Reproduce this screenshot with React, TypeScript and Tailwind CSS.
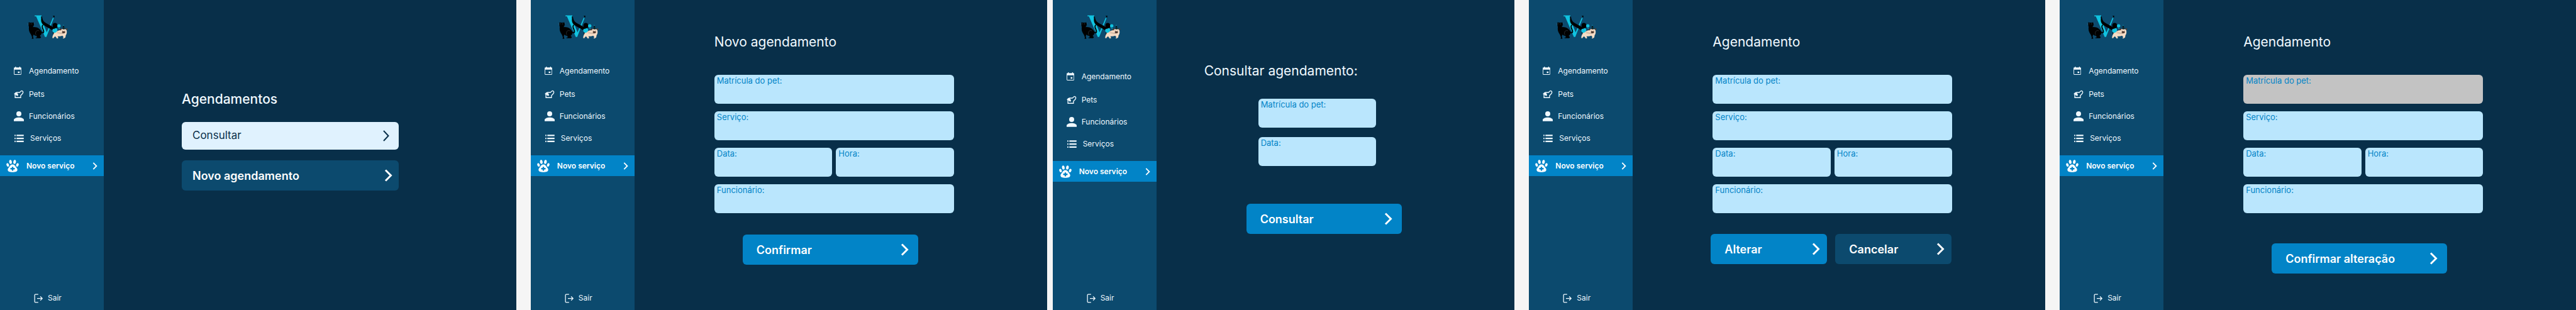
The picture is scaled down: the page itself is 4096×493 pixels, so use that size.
import type { ReactNode } from "react";

function Logo() {
  return (
    <svg viewBox="75 64 340 200" className="ml-[43px] mt-6 h-[38px] w-[65px] shrink-0" role="img" aria-label="Logo">
      <path d="M138 67h57v8l-8 2 52 132 51-122 8 2-62 158h-12L150 75h-12z" fill="#10c3e0" />
      <path d="M290 69h15l-4 20-5-10z" fill="#000" />
      <path d="M198 70c5 16 4 34 20 50 22 18 46 24 84 52l-8 24c-34-22-62-34-82-50-24-18-24-46-14-76z" fill="#000" />
      <ellipse cx="308" cy="153" rx="20" ry="23" fill="#000" />
      <path d="M290 208l14 2-2 26-12 12c4-12 6-24 0-40z" fill="#000" />
      <circle cx="341" cy="154" r="14" fill="#10c3e0" />
      <path d="M341 166l7 14h-8z" fill="#10c3e0" />
      <path
        d="M89 122l10 6q9-4 18 0l10-5q6 12 4 24-2 12-10 18c22-2 44 2 62 20 10 10 14 20 18 23 10 2 8-12 2-24-8-16-10-36 6-41l4 5c-10 4-8 18-2 30 10 20 10 38-6 38l-8-2c-2 12-10 18-16 24 4 6 10 6 10 12l-6 7h-38c-4-4 2-8 12-8l-8-12c-10 0-16-4-20-10-10 8-8 20-4 28l2 6-14 2c-4-3 0-7 2-8-4-14-6-24-14-34-12-16-16-36-13-58-4-10-5-24-1-41z"
        fill="#000"
      />
      <path d="M146 206c6-12 18-16 30-10M150 230c-6-8-6-16-2-24M86 138l-8-3M86 143l-8 4M132 134l6-4" stroke="#7d93a1" strokeWidth="1.500" fill="none" />
      <path d="M97 137l4 1M112 138l4-1" stroke="#fff" strokeWidth="2" />
      <path
        d="M306 194c16 8 30 2 48-8 8-10 40-12 50 2 6 20 2 36-6 46-2 8 0 14-6 20l-12 6-8-3 8-8-10-12c-14 6-28 6-40 4l6 14-10 6-16-20-10 8-4 8-10-1c0-14 4-24 10-34z"
        fill="#f6dcc5"
      />
      <path d="M318 196c14 10 28 18 64 18M322 210c20 10 34 12 56 8" stroke="#6d5347" strokeWidth="1.500" fill="none" />
      <path d="M352 194c-8-6-6-16 4-18l10 6zM400 176c8-4 14 2 13 10l-9 4z" fill="#4f3a31" />
      <path d="M366 196l8 2M388 196l6 1" stroke="#2a1d18" strokeWidth="3" />
      <ellipse cx="380" cy="207" rx="14" ry="9" fill="#4f3a31" />
      <path d="M286 192c0-14 12-18 18-10 4-14 24-12 24 6 0 12-10 20-22 26-12-2-20-10-20-22z" fill="#10c3e0" />
      <path d="M378 148l18 32q-14 6-27 1z" fill="#0b1116" />
      <path d="M378 146l1 8M374 170l4 4M385 166l3 5M387 178l3 1" stroke="#10c3e0" strokeWidth="4" />
    </svg>
  );
}

function CalendarIcon() {
  return (
    <svg viewBox="114 66 84 69" className="h-[13px] w-[16px]" fill="currentColor" aria-hidden="true">
      <path
        fillRule="evenodd"
        d="M121 72h4v-6h7v6h28v-6h7v6h4q6 0 6 6v51q0 6-6 6h-51q-6 0-6-6V78q0-6 6-6zM119 91v36q0 3 3 3h48q3 0 3-3V91z"
      />
      <path d="M148 107h14v13h-14z" />
    </svg>
  );
}

function DogIcon() {
  return (
    <svg viewBox="18 14 82 68" className="h-[13px] w-[16px]" fill="none" stroke="currentColor" strokeWidth="7" aria-hidden="true">
      <path d="M28 47v31h46V61l16-17c5-8 3-18-3-22l-6-1-16 14H41L28 42" />
      <path d="M19 45l14-11 10 2 6 10c5 6 6 12 2 16-4 4-10 2-14-2l-6-8-8 1z" fill="currentColor" stroke="none" />
    </svg>
  );
}

function PersonIcon() {
  return (
    <svg viewBox="114 448 84 83" className="h-[16px] w-[16px]" fill="currentColor" aria-hidden="true">
      <circle cx="156" cy="469" r="21" />
      <path d="M114 530v-10c0-13 24-21 42-21s42 8 42 21v10z" />
    </svg>
  );
}

function ListIcon() {
  return (
    <svg viewBox="114 632 96 64" className="h-[12px] w-[18px]" fill="currentColor" aria-hidden="true">
      <path d="M120 633h9v12h-9zM137 633h61v12h-61zM120 659h9v12h-9zM137 659h61v12h-61zM120 684h9v12h-9zM137 684h61v12h-61z" />
    </svg>
  );
}

function PawIcon() {
  return (
    <svg viewBox="54 845 102 104" className="h-5 w-5" fill="currentColor" aria-hidden="true">
      <ellipse cx="88" cy="863" rx="11" ry="17" transform="rotate(-8 88 863)" />
      <ellipse cx="122" cy="863" rx="11" ry="17" transform="rotate(8 122 863)" />
      <ellipse cx="65" cy="888" rx="10" ry="15" transform="rotate(-18 65 888)" />
      <ellipse cx="145" cy="888" rx="10" ry="15" transform="rotate(18 145 888)" />
      <path
        fillRule="evenodd"
        d="M105 884c14 0 20 10 28 22 6 8 12 12 12 22 0 14-16 20-40 20s-40-6-40-20c0-10 6-14 12-22 8-12 14-22 28-22zM99 903v10H87v12h12v11h12v-11h12v-12h-12v-10z"
      />
    </svg>
  );
}

function LogoutIcon() {
  return (
    <svg viewBox="24 18 76 82" className="h-[15px] w-[14px]" fill="none" stroke="currentColor" strokeWidth="7" aria-hidden="true">
      <path d="M61 24H36q-6 0-6 6v58q0 6 6 6h25M51 60h44M79 43l17 17-17 17" />
    </svg>
  );
}

function Chevron({ className }: { className: string }) {
  return (
    <svg viewBox="0 0 13 20" className={className} fill="none" stroke="currentColor" strokeWidth="3" aria-hidden="true">
      <path d="M2 1.500L10.500 10 2 18.500" />
    </svg>
  );
}

function MenuLink({ icon, children }: { icon: ReactNode; children: ReactNode }) {
  return (
    <a href="#" className="flex h-[35px] items-center gap-2 pl-[22px] text-[12px]">
      {icon}
      {children}
    </a>
  );
}

function Sidebar({ low }: { low?: boolean }) {
  return (
    <aside className="flex w-[165px] shrink-0 flex-col bg-[#0c4a6e] text-[#f0f9ff]">
      <Logo />
      <nav className={low ? "mt-[42px] flex flex-col" : "mt-[33px] flex flex-col"}>
        <MenuLink icon={<CalendarIcon />}>Agendamento</MenuLink>
        <div className="mt-[2px] flex flex-col">
          <MenuLink icon={<DogIcon />}>Pets</MenuLink>
          <MenuLink icon={<PersonIcon />}>Funcionários</MenuLink>
          <MenuLink icon={<ListIcon />}>Serviços</MenuLink>
        </div>
        <a href="#" aria-current="page" className="mt-[10px] flex h-[33px] items-center bg-[#0284c7] px-[10px] text-[12px] font-semibold text-white">
          <PawIcon />
          <span className="ml-3 flex-1">Novo serviço</span>
          <Chevron className="h-3 w-2" />
        </a>
      </nav>
      <a href="#" className="mb-[9px] mt-auto flex items-center gap-2 pl-[54px] text-[12px] leading-5">
        <LogoutIcon />
        Sair
      </a>
    </aside>
  );
}

function Screen({ grow, low, children }: { grow: string; low?: boolean; children: ReactNode }) {
  return (
    <section className={"flex min-w-0 bg-[#082f49] " + grow}>
      <Sidebar low={low} />
      <main className="flex min-w-0 flex-1 flex-col items-start">{children}</main>
    </section>
  );
}

function Field({ label, disabled }: { label: string; disabled?: boolean }) {
  return (
    <label
      className={
        "flex h-[46px] w-full min-w-0 flex-col rounded-md px-1 text-[13px] leading-[18px] text-[#0284c7] " +
        (disabled ? "bg-[#c3c3c3]" : "bg-[#bae6fd]")
      }
    >
      {label}
      <input type="text" disabled={disabled} className="min-h-0 w-full flex-1 bg-transparent text-[#082f49] outline-none" />
    </label>
  );
}

function ActionButton({ children, tone, size }: { children: ReactNode; tone: string; size: string }) {
  return (
    <button type="button" className={"flex h-12 items-center justify-between rounded-md text-left text-[18px] font-semibold text-white " + tone + " " + size}>
      {children}
      <Chevron className="h-5 w-[13px]" />
    </button>
  );
}

function AppointmentForm({ title, locked, children }: { title: string; locked?: boolean; children: ReactNode }) {
  return (
    <form className="ml-[127px] flex w-[381px] max-w-full flex-col pt-[52px]">
      <h1 className="text-[21px] leading-[30px] text-[#f0f9ff]">{title}</h1>
      <div className="mt-[37px] flex flex-col gap-3">
        <Field label="Matrícula do pet:" disabled={locked} />
        <Field label="Serviço:" />
        <div className="grid grid-cols-2 gap-[6px]">
          <Field label="Data:" />
          <Field label="Hora:" />
        </div>
        <Field label="Funcionário:" />
      </div>
      {children}
    </form>
  );
}

export default function App() {
  return (
    <div className="flex min-h-screen bg-[#f5f5f5] font-['Inter',sans-serif]">
      <Screen grow="flex-[1430] mr-[23px]">
        <div className="ml-[124px] flex w-[345px] max-w-full flex-col pt-[143px]">
          <h1 className="text-[21px] font-medium leading-[30px] text-[#f0f9ff]">Agendamentos</h1>
          <button type="button" className="mt-[21px] flex h-11 items-center justify-between rounded-md bg-[#e0f2fe] pl-[17px] pr-[15px] text-left text-[17px] text-[#082f49]">
            Consultar
            <svg viewBox="0 0 10 18" className="h-[18px] w-[10px]" fill="none" stroke="currentColor" strokeWidth="2" aria-hidden="true">
              <path d="M1 1l7.500 8L1 17" />
            </svg>
          </button>
          <button type="button" className="mt-[17px] flex h-12 items-center justify-between rounded-md bg-[#0c4a6e] pl-[17px] pr-[10px] text-left text-[18px] font-semibold text-white">
            Novo agendamento
            <Chevron className="h-5 w-[13px]" />
          </button>
        </div>
      </Screen>
      <Screen grow="flex-[1430] mr-[9px]">
        <AppointmentForm title="Novo agendamento">
          <div className="mt-[34px] flex pl-[45px]">
            <ActionButton tone="bg-[#0284c7]" size="w-[279px] pl-[22px] pr-[15px]">Confirmar</ActionButton>
          </div>
        </AppointmentForm>
      </Screen>
      <Screen grow="flex-[1280] mr-[23px]" low>
        <form className="ml-[76px] flex flex-col pt-[98px]">
          <h1 className="text-[21px] leading-[30px] text-[#f0f9ff]">Consultar agendamento:</h1>
          <div className="ml-[86px] mt-[29px] flex w-[187px] flex-col gap-[15px]">
            <Field label="Matrícula do pet:" />
            <Field label="Data:" />
          </div>
          <div className="mt-[60px] flex pl-[67px]">
            <ActionButton tone="bg-[#0284c7]" size="w-[247px] pl-[22px] pr-[15px]">Consultar</ActionButton>
          </div>
        </form>
      </Screen>
      <Screen grow="flex-[1430] mr-[23px]">
        <AppointmentForm title="Agendamento">
          <div className="-ml-[3px] mt-[33px] flex w-[383px] gap-[13px]">
            <ActionButton tone="bg-[#0284c7]" size="flex-1 pl-[22px] pr-[11px]">Alterar</ActionButton>
            <ActionButton tone="bg-[#0c4a6e]" size="flex-1 pl-[22px] pr-[11px]">Cancelar</ActionButton>
          </div>
        </AppointmentForm>
      </Screen>
      <Screen grow="flex-[1430]">
        <AppointmentForm title="Agendamento" locked>
          <div className="mt-[48px] flex pl-[45px]">
            <ActionButton tone="bg-[#0284c7]" size="w-[279px] pl-[22px] pr-[15px]">Confirmar alteração</ActionButton>
          </div>
        </AppointmentForm>
      </Screen>
    </div>
  );
}
